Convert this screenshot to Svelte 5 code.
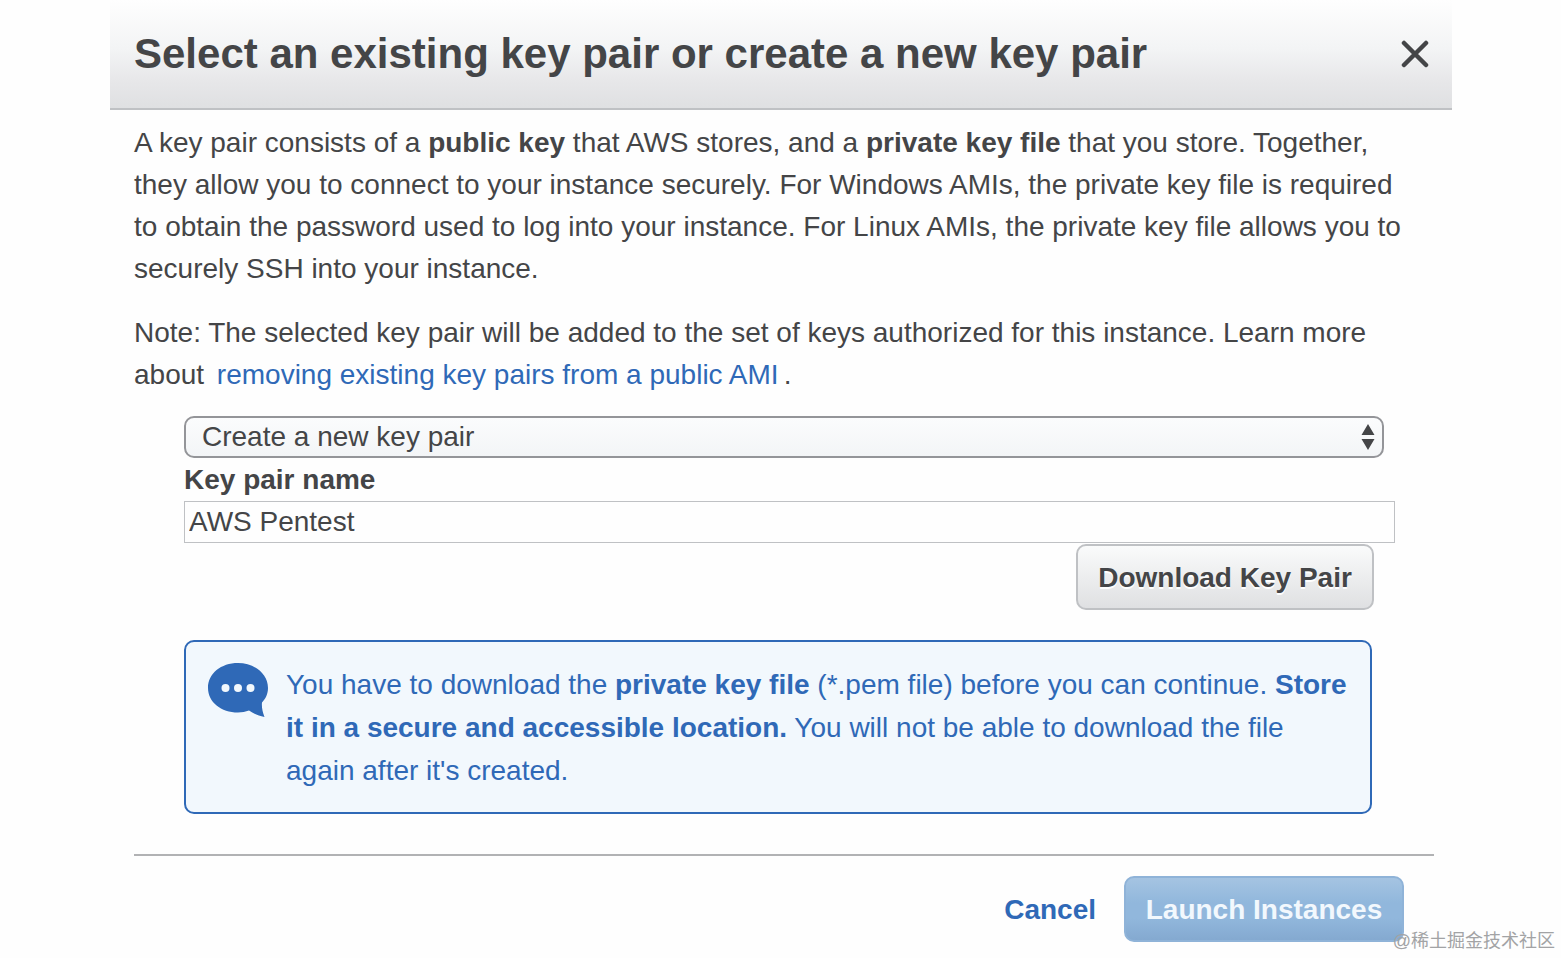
<script>
  let choice = $state('new');
  let keyName = $state('AWS Pentest');
</script>

<div class="page">
  <section class="dialog" aria-labelledby="dialog-title">
    <header class="header">
      <h1 id="dialog-title">Select an existing key pair or create a new key pair</h1>
      <button class="close" type="button" aria-label="Close">
        <svg viewBox="0 0 28 28" width="28" height="28" aria-hidden="true">
          <path d="M3 3 25 25M25 3 3 25" fill="none" stroke="#444547" stroke-width="4.500" stroke-linecap="round" />
        </svg>
      </button>
    </header>

    <div class="body">
      <p>
        A key pair consists of a <b>public key</b> that AWS stores, and a <b>private key file</b> that you store.
        Together, they allow you to connect to your instance securely. For Windows AMIs, the private key file is
        required to obtain the password used to log into your instance. For Linux AMIs, the private key file allows
        you to securely SSH into your instance.
      </p>
      <p>
        Note: The selected key pair will be added to the set of keys authorized for this instance. Learn more about
        <a class="learn" href="#remove">removing existing key pairs from a public AMI</a>.
      </p>

      <form class="form">
        <div class="select-wrap">
          <select bind:value={choice} aria-label="Key pair option">
            <option value="new">Create a new key pair</option>
          </select>
          <svg class="arrows" viewBox="0 0 14 26" width="14" height="26" aria-hidden="true">
            <path d="M7 0 13.500 11H.5ZM7 26 13.500 15H.5Z" fill="#444547" />
          </svg>
        </div>
        <label for="key-name">Key pair name</label>
        <input id="key-name" type="text" bind:value={keyName} />
        <div class="download-row">
          <button class="download" type="button">Download Key Pair</button>
        </div>
        <div class="notice">
          <svg class="bubble" viewBox="0 0 62 56" width="62" height="56" aria-hidden="true">
            <path
              d="M31 0C47 0 61 10.500 61 25C61 31 58.500 36 55 39.500C54.500 44 55.500 49 57.500 54C51 52.500 46 50.500 42 47.500C38.500 48.700 35 49.500 31 49.500C14 49.500 1 39 1 25C1 10.500 14 0 31 0Z"
              fill="#2f69b7"
            />
            <g fill="#f2f8fd">
              <circle cx="18.500" cy="25" r="4" />
              <circle cx="31" cy="25" r="4" />
              <circle cx="43.500" cy="25" r="4" />
            </g>
          </svg>
          <p>
            You have to download the <b>private key file</b> (*.pem file) before you can continue.
            <b>Store it in a secure and accessible location.</b> You will not be able to download the file again
            after it's created.
          </p>
        </div>
      </form>

      <footer class="footer">
        <button class="cancel" type="button">Cancel</button>
        <button class="launch" type="button">Launch Instances</button>
      </footer>
    </div>
  </section>
  <span class="credit">@稀土掘金技术社区</span>
</div>

<style>
  :global(body) {
    background: #fefefe;
  }
  .page,
  .page * {
    box-sizing: border-box;
  }
  .page {
    position: relative;
    padding: 0 109px 16px 110px;
    color: #444547;
    font: 28px/42px 'Liberation Sans', Arial, sans-serif;
  }
  button,
  input,
  select {
    font: inherit;
    color: inherit;
    margin: 0;
  }
  .header {
    display: flex;
    align-items: center;
    justify-content: space-between;
    height: 110px;
    padding: 0 23px 0 24px;
    border-bottom: 2px solid #bfc1c4;
    background: linear-gradient(#fefefe 0%, #f3f4f5 45%, #e7e7e9 75%, #dfe0e2 100%);
  }
  h1 {
    margin: 0;
    font-size: 42px;
    line-height: 48px;
  }
  .close {
    display: flex;
    padding: 0;
    border: 0;
    background: none;
  }
  .body {
    padding: 12px 18px 0 24px;
  }
  p {
    margin: 0 18px 22px 0;
  }
  a {
    color: #2f69b7;
    text-decoration: none;
  }
  .learn {
    margin: 0 5px;
  }
  .form {
    display: flex;
    flex-direction: column;
    padding: 0 39px 40px 50px;
    margin-top: -2px;
  }
  .select-wrap {
    position: relative;
    margin-right: 11px;
  }
  select {
    display: block;
    width: 100%;
    height: 42px;
    padding: 0 16px;
    border: 2px solid #949599;
    border-radius: 10px;
    appearance: none;
    line-height: 38px;
    background: linear-gradient(#fbfcfd, #f3f5f7);
  }
  .arrows {
    position: absolute;
    right: 9px;
    top: 8px;
    pointer-events: none;
  }
  label {
    padding-top: 1px;
    font-weight: bold;
  }
  input {
    height: 42px;
    padding: 0 4px;
    border: 1px solid #bfc1c4;
    background: #fefefe;
  }
  .download-row {
    display: flex;
    justify-content: flex-end;
    padding: 1px 21px 30px 0;
  }
  .download,
  .launch {
    height: 66px;
    padding: 2px 18px 0;
    border: 2px solid #bfc1c4;
    border-radius: 10px;
    font-weight: bold;
  }
  .download {
    min-width: 298px;
    background: linear-gradient(#fafbfb, #dfe0e2);
    text-shadow: 0 2px 0 #fefefe;
  }
  .notice {
    display: flex;
    align-items: flex-start;
    gap: 17px;
    margin-right: 23px;
    padding: 21px 18px 20px 21px;
    border: 2px solid #2f69b7;
    border-radius: 10px;
    background: #f2f8fd;
    color: #2f69b7;
  }
  .notice p {
    margin: 0;
    line-height: 43px;
  }
  .bubble {
    flex: none;
  }
  .footer {
    display: flex;
    justify-content: flex-end;
    gap: 28px;
    padding: 20px 30px 0 0;
    border-top: 2px solid #b1b2b4;
  }
  .cancel {
    padding: 2px 0 0;
    border: 0;
    background: none;
    color: #2f69b7;
    font-weight: bold;
  }
  .launch {
    min-width: 280px;
    border-color: #8fb3d8;
    background: linear-gradient(#a5c4e2, #91b7dc 40%, #91b7dc 65%, #84a9d0);
    color: #f2f8fd;
  }
  .credit {
    position: absolute;
    right: 6px;
    bottom: 5px;
    color: #a2a3a5;
    font: 18px/24px 'Liberation Sans', 'Noto Sans CJK SC', sans-serif;
  }
</style>
